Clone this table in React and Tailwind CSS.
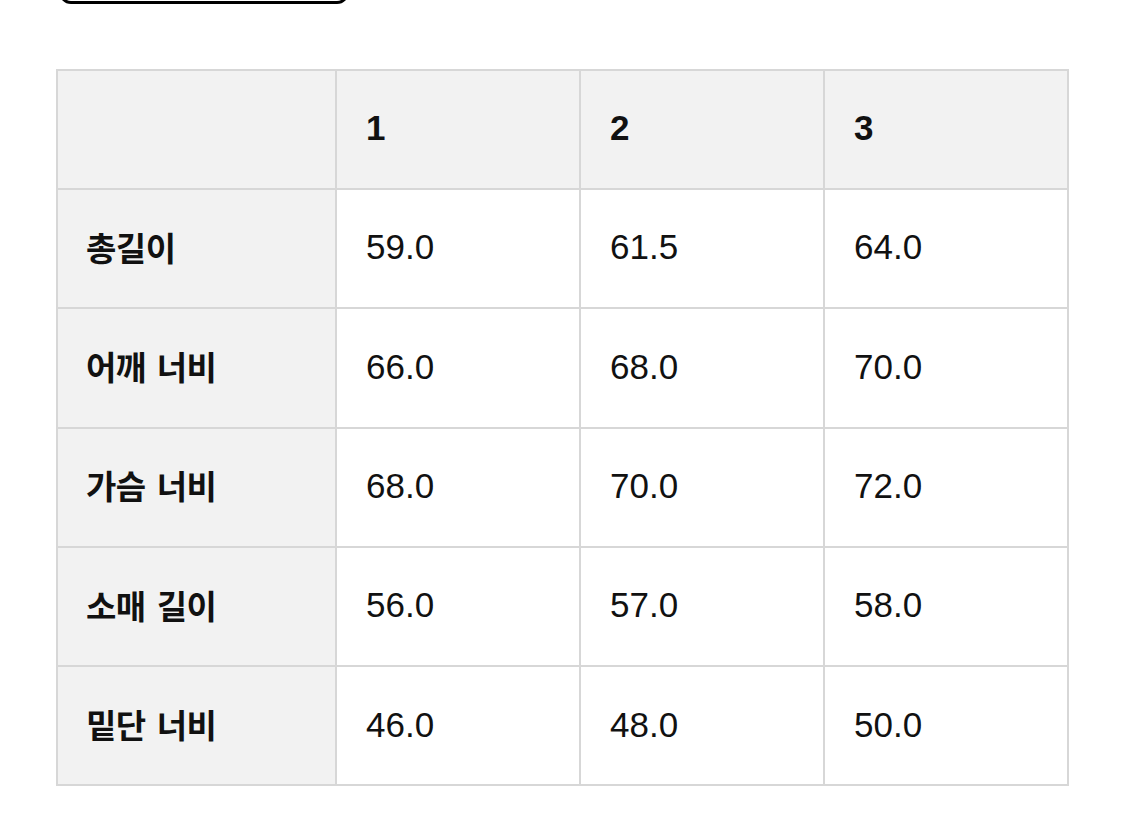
import React from "react";

const rows = [
    { label: "총길이", values: ["59.0", "61.5", "64.0"] },
    { label: "어깨 너비", values: ["66.0", "68.0", "70.0"] },
    { label: "가슴 너비", values: ["68.0", "70.0", "72.0"] },
    { label: "소매 길이", values: ["56.0", "57.0", "58.0"] },
    { label: "밑단 너비", values: ["46.0", "48.0", "50.0"] },
];

const korean = { fontFamily: '"Noto Sans CJK KR", "Liberation Sans", sans-serif' };
const latin = { fontFamily: '"Liberation Sans", "Noto Sans CJK KR", sans-serif' };

const App = () => {
    return (
        <div className="w-[1125px] h-[839px] bg-white overflow-hidden">
            {/* cut-off button above the table */}
            <div className="h-[4px] overflow-hidden pl-[59px]">
                <div className="w-[290px] h-[44px] -mt-[40px] rounded-[12px] border-[3px] border-black" />
            </div>

            <div className="pl-[56px] pt-[65px]">
                <table className="border-collapse table-fixed w-[1012px] text-[#111]">
                    <colgroup>
                        <col className="w-[279px]" />
                        <col className="w-[244px]" />
                        <col className="w-[244px]" />
                        <col className="w-[244px]" />
                    </colgroup>
                    <thead>
                        <tr className="h-[119px] bg-[#f2f2f2]">
                            <th className="border-2 border-[#d7d7d7]" />
                            {["1", "2", "3"].map((n) => (
                                <th
                                    key={n}
                                    style={latin}
                                    className="border-2 border-[#d7d7d7] text-left pl-[29px] pb-[2px] text-[35px] font-bold"
                                >
                                    {n}
                                </th>
                            ))}
                        </tr>
                    </thead>
                    <tbody>
                        {rows.map((row) => (
                            <tr key={row.label} className="h-[119.3px]">
                                <td
                                    style={korean}
                                    className="border-2 border-[#d7d7d7] bg-[#f2f2f2] pl-[28px] pb-[2px] text-[33px] font-bold tracking-[-0.5px] [word-spacing:4px]"
                                >
                                    {row.label}
                                </td>
                                {row.values.map((v, i) => (
                                    <td
                                        key={i}
                                        style={latin}
                                        className="border-2 border-[#d7d7d7] pl-[29px] pb-[2px] text-[35px]"
                                    >
                                        {v}
                                    </td>
                                ))}
                            </tr>
                        ))}
                    </tbody>
                </table>
            </div>
        </div>
    );
};

export default App;
